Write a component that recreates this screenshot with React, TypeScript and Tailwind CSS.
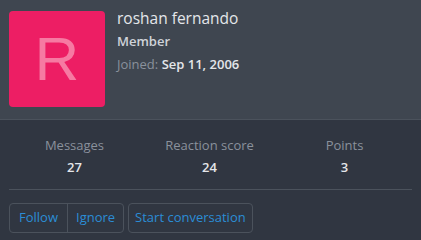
export default function App() {
  return (
    <div
      className="w-[421px] h-[240px] bg-[#303641] text-[13px] overflow-hidden"
      style={{ fontFamily: '"Open Sans", "Noto Sans", sans-serif' }}
    >
      {/* header: avatar + name */}
      <div className="h-[120px] bg-[#3f4650] border-b border-[#4b525c] flex pl-[9px] pt-[11px]">
        <div className="w-[96px] h-[96px] rounded-[4px] bg-[#ed1e64] flex items-center justify-center">
          <span
            className="text-[#f67aa2] text-[62px] leading-none"
            style={{ fontFamily: '"Liberation Sans", Arial, sans-serif' }}
          >
            R
          </span>
        </div>
        <div className="ml-[12px] flex flex-col">
          <h1 className="text-[15.5px] leading-[22px] text-[#e4e6ea] -mt-[4px]">roshan fernando</h1>
          <div className="mt-[4px] font-semibold text-[#cfd3d9] leading-[16px]">Member</div>
          <div className="mt-[7px] leading-[16px] text-[#8a919c]">
            Joined: <span className="font-semibold text-[#e4e6ea]">Sep 11, 2006</span>
          </div>
        </div>
      </div>

      {/* stats */}
      <div className="mx-[9px] pt-[16px] pb-[13px] border-b border-[#4b525c]">
        <div className="flex -ml-[2px]">
          {[
            ["Messages", "27"],
            ["Reaction score", "24"],
            ["Points", "3"],
          ].map(([label, value]) => (
            <div key={label} className="flex flex-col items-center w-[136px]">
              <span className="text-[#8a919c] leading-[18px]">{label}</span>
              <span className="mt-[4px] font-semibold text-[#e4e6ea] leading-[18px]">{value}</span>
            </div>
          ))}
        </div>
      </div>

      {/* actions */}
      <div className="flex gap-[4px] pl-[9px] pt-[13px]">
        <div className="flex h-[30px] border border-[#4b525c] rounded-[4px] text-[#2b8dd6]">
          <button className="px-[9px] border-r border-[#4b525c]">Follow</button>
          <button className="px-[8px]">Ignore</button>
        </div>
        <button className="h-[30px] px-[6px] border border-[#4b525c] rounded-[4px] text-[#2b8dd6]">
          Start conversation
        </button>
      </div>
    </div>
  );
}
